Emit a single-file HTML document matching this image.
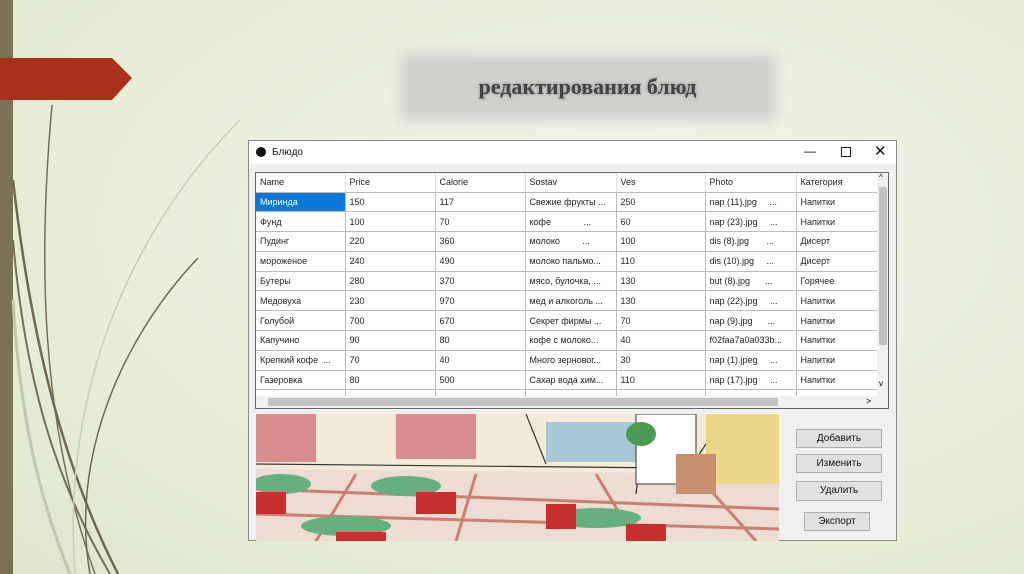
<!DOCTYPE html>
<html><head><meta charset="utf-8"><style>
*{margin:0;padding:0;box-sizing:border-box}
body{width:1024px;height:574px;overflow:hidden;position:relative;background:radial-gradient(ellipse at 60% 40%,#f2f5ea 0%,#e6ecd6 70%,#dfe6cc 100%);font-family:"Liberation Sans",sans-serif}
.abs{position:absolute}
.win{left:248px;top:140px;width:649px;height:401px;background:#f0f0f0;border:1px solid #8a8a8a}
.tb{left:0;top:0;width:647px;height:23px;background:#fff;font-size:10px;color:#111}
.grid{left:6px;top:31px;width:634px;height:237px;background:#fff;border:1px solid #666;overflow:hidden}
table{border-collapse:collapse;font-size:9px;color:#222;table-layout:fixed}
td{height:19.8px;border-right:1px solid #bbb;border-bottom:1px solid #bbb;padding-left:4px;white-space:nowrap;overflow:hidden}
tr.h td{background:#fff;border-right:1px solid #ddd;height:19px}
.btn{background:#e1e1e1;border:1px solid #adadad;font-size:10px;color:#111;text-align:center;line-height:18px}
</style></head><body>
<svg class="abs" style="left:0;top:0" width="300" height="574">
<rect x="0" y="0" width="13" height="574" fill="#7a7156"/>
<polygon points="0,58 112,58 132,78 112,100 0,100" fill="#a9301a"/>
<path d="M52,105 C38,260 40,420 95,574" stroke="#757056" stroke-width="1.5" fill="none"/>
<path d="M13,180 C30,330 60,460 118,574" stroke="#6f6a4e" stroke-width="2.5" fill="none"/>
<path d="M13,240 C25,380 55,480 110,574" stroke="#757056" stroke-width="2" fill="none"/>
<path d="M198,258 C120,340 70,460 90,574" stroke="#6f6a4e" stroke-width="1.5" fill="none"/>
<path d="M240,120 C140,220 60,380 75,574" stroke="#c8cfb6" stroke-width="1.5" fill="none"/>
<path d="M13,300 C20,420 40,500 70,574" stroke="#c2c8ae" stroke-width="3" fill="none"/>
</svg>
<div class="abs" style="left:408px;top:62px;width:360px;height:50px;background:#cfd0cc;box-shadow:0 0 12px 8px #d2d4ce"></div>
<div class="abs" style="left:405px;top:74px;width:365px;text-align:center;font-family:'Liberation Serif',serif;font-weight:bold;font-size:22px;color:#444;text-shadow:0 0 3px #888">редактирования блюд</div>
<div class="abs win">
<div class="abs tb"><span class="abs" style="left:7px;top:6px;width:10px;height:10px;border-radius:50%;background:#111"></span><span class="abs" style="left:23px;top:6px">Блюдо</span>
<span class="abs" style="left:555px;top:3px;font-size:12px">—</span><span class="abs" style="left:592px;top:6px;width:10px;height:10px;border:1px solid #222"></span><span class="abs" style="left:625px;top:1px;font-size:15px">✕</span></div>
<div class="abs grid">
<table style="width:622px"><colgroup><col style="width:89px"><col style="width:90px"><col style="width:90px"><col style="width:91px"><col style="width:89px"><col style="width:91px"><col style="width:82px"></colgroup>
<tr class="h"><td>Name</td><td>Price</td><td>Calorie</td><td>Sostav</td><td>Ves</td><td>Photo</td><td>Категория</td></tr>
<tr><td style="background:#0a78d7;color:#fff">Миринда</td><td>150</td><td>117</td><td>Свежие фрукты ...</td><td>250</td><td>nap (11).jpg &nbsp; &nbsp; ...</td><td>Напитки</td></tr>
<tr><td>Фунд</td><td>100</td><td>70</td><td>кофе &nbsp; &nbsp; &nbsp; &nbsp; &nbsp; &nbsp; ...</td><td>60</td><td>nap (23).jpg &nbsp; &nbsp; ...</td><td>Напитки</td></tr>
<tr><td>Пудинг</td><td>220</td><td>360</td><td>молоко &nbsp; &nbsp; &nbsp; &nbsp; ...</td><td>100</td><td>dis (8).jpg &nbsp; &nbsp; &nbsp; ...</td><td>Дисерт</td></tr>
<tr><td>мороженое</td><td>240</td><td>490</td><td>молоко пальмо...</td><td>110</td><td>dis (10).jpg &nbsp; &nbsp; ...</td><td>Дисерт</td></tr>
<tr><td>Бутеры</td><td>280</td><td>370</td><td>мясо, булочка, ...</td><td>130</td><td>but (8).jpg &nbsp; &nbsp; &nbsp;...</td><td>Горячее</td></tr>
<tr><td>Медовуха</td><td>230</td><td>970</td><td>мед и алкоголь ...</td><td>130</td><td>nap (22).jpg &nbsp; &nbsp; ...</td><td>Напитки</td></tr>
<tr><td>Голубой</td><td>700</td><td>670</td><td>Секрет фирмы ...</td><td>70</td><td>nap (9).jpg &nbsp; &nbsp; &nbsp;...</td><td>Напитки</td></tr>
<tr><td>Капучино</td><td>90</td><td>80</td><td>кофе с молоко...</td><td>40</td><td>f02faa7a0a033b...</td><td>Напитки</td></tr>
<tr><td>Крепкий кофе &nbsp;...</td><td>70</td><td>40</td><td>Много зерновог...</td><td>30</td><td>nap (1).jpeg &nbsp; &nbsp; ...</td><td>Напитки</td></tr>
<tr><td>Газеровка</td><td>80</td><td>500</td><td>Сахар вода хим...</td><td>110</td><td>nap (17).jpg &nbsp; &nbsp; ...</td><td>Напитки</td></tr>
<tr><td>Ч...</td><td>95</td><td>90</td><td>Ч...</td><td>40</td><td>nap (19)...</td><td>Н...</td></tr>
</table>
<div class="abs" style="left:621px;top:0;width:12px;height:223px;background:#f0f0f0"><div class="abs" style="left:2px;top:14px;width:8px;height:158px;background:#c2c2c2"></div><span class="abs" style="left:2px;top:0;font-size:8px">^</span><span class="abs" style="left:2px;top:206px;font-size:8px">v</span></div>
<div class="abs" style="left:0;top:223px;width:633px;height:12px;background:#f0f0f0"><div class="abs" style="left:12px;top:2px;width:510px;height:8px;background:#c2c2c2"></div><span class="abs" style="left:610px;top:0;font-size:9px">&gt;</span></div>
</div>
<svg class="abs" style="left:7px;top:273px" width="523" height="127">
<rect width="523" height="127" fill="#f3ead8"/>
<polygon points="0,55 523,60 523,127 0,127" fill="#ecdcd2"/>
<path d="M0,75 L523,95 M0,100 L523,115 M100,60 L60,127 M220,60 L200,127 M340,60 L380,127 M440,60 L500,127" stroke="#c98070" stroke-width="3"/>
<path d="M0,50 L523,55 M270,0 L290,50 M390,0 L380,80 M470,0 L430,60" stroke="#333" stroke-width="1.2"/>
<rect x="0" y="0" width="60" height="48" fill="#d88c8c"/><rect x="140" y="0" width="80" height="45" fill="#d88c8c"/>
<rect x="290" y="8" width="90" height="40" fill="#a8c8d8"/><rect x="380" y="0" width="60" height="70" fill="#fff" stroke="#333"/>
<rect x="450" y="0" width="73" height="70" fill="#e8d888"/><rect x="420" y="40" width="40" height="40" fill="#c89070"/>
<ellipse cx="385" cy="20" rx="15" ry="12" fill="#4c9a50"/>
<ellipse cx="25" cy="70" rx="30" ry="10" fill="#66b080"/><ellipse cx="150" cy="72" rx="35" ry="10" fill="#66b080"/><ellipse cx="90" cy="112" rx="45" ry="10" fill="#66b080"/><ellipse cx="340" cy="104" rx="45" ry="10" fill="#66b080"/>
<rect x="160" y="78" width="40" height="22" fill="#c83030"/><rect x="0" y="78" width="30" height="22" fill="#c83030"/><rect x="80" y="118" width="50" height="9" fill="#c83030"/><rect x="370" y="110" width="40" height="17" fill="#c83030"/><rect x="290" y="90" width="30" height="25" fill="#c83030"/>
</svg>
<div class="abs btn" style="left:547px;top:288px;width:86px;height:19px">Добавить</div>
<div class="abs btn" style="left:547px;top:313px;width:86px;height:19px">Изменить</div>
<div class="abs btn" style="left:547px;top:340px;width:86px;height:20px">Удалить</div>
<div class="abs btn" style="left:555px;top:371px;width:66px;height:19px">Экспорт</div>
</div>
</body></html>
